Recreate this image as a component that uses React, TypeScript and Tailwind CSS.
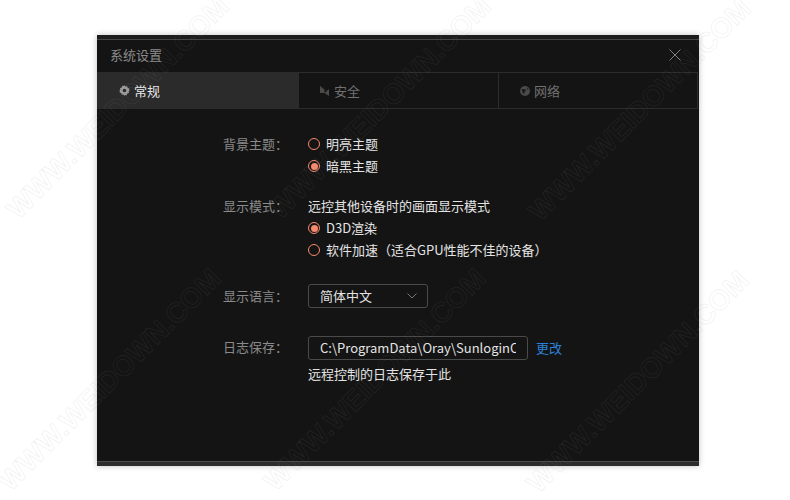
const font = { fontFamily: '"Noto Sans CJK SC", "Noto Sans", sans-serif' };

// centres of the diagonal watermark tiles
const marks = [
  [118, 108],
  [380, 108],
  [640, 110],
  [110, 380],
  [375, 380],
  [638, 382],
];

function Radio({ checked, label }: { checked?: boolean; label: string }) {
  return (
    <label className="flex h-[22px] items-center text-[13px] text-[#e4e4e4]">
      <span className="mr-[6px] flex h-3 w-3 items-center justify-center rounded-full border-[1.5px] border-[#f58a6c]">
        {checked && <span className="h-[7px] w-[7px] rounded-full bg-[#f58a6c]" />}
      </span>
      {label}
    </label>
  );
}

function Tab({ active, label, icon, width }: { active?: boolean; label: string; icon: React.ReactNode; width: string }) {
  return (
    <div
      className={
        active
          ? `flex h-[37px] items-center bg-[#2b2b2b] pl-[21px] text-[13px] text-[#e8e8e8] ${width}`
          : `flex h-[37px] items-center border-y border-r border-[#2c2c2c] pl-[20px] text-[13px] text-[#707070] ${width}`
      }
    >
      <span className={`flex h-3 w-3 items-center justify-center ${active ? "mr-[4px]" : "mr-[3px]"}`}>{icon}</span>
      {label}
    </div>
  );
}

function Row({ label, children, className }: { label: string; children: React.ReactNode; className?: string }) {
  return (
    <div className={`flex ${className ?? ""}`}>
      <div className="flex h-[22px] w-[85px] items-center text-[13px] text-[#8a8a8a]">{label}</div>
      <div className="flex flex-col">{children}</div>
    </div>
  );
}

export default function App() {
  return (
    <div className="relative h-[500px] w-[790px] overflow-hidden bg-white pl-[97px] pt-[35px]" style={font}>
      <div className="flex h-[431px] w-[602px] flex-col bg-[#141414] shadow-[0_0_6px_rgba(0,0,0,0.25)]">
        <div className="h-[5px] border-b border-[#444] bg-[#1c1c1c]" />
        <div className="flex h-[32px] items-center justify-between pb-[2px] pl-[13px] pr-[18px]">
          <span className="text-[13px] text-[#8c8c8c]">系统设置</span>
          <svg width="12" height="12" viewBox="0 0 12 12" fill="none" stroke="#808080" strokeWidth="1">
            <path d="M0.5 0.5l11 11M11.5 0.5l-11 11" />
          </svg>
        </div>
        <div className="flex">
          <Tab
            active
            width="w-[202px]"
            label="常规"
            icon={
              <svg width="11" height="11" viewBox="0 0 12 12" fill="#9a9a9a">
                <path fillRule="evenodd" d="M6 0l1.1 1.6 1.9-.3.5 1.9 1.9.6-.4 1.9L12 6l-1.5.9.4 1.9-1.9.6-.5 1.9-1.9-.3L6 12l-1.1-1.6-1.9.3-.5-1.9-1.9-.6.4-1.9L0 6l1.5-.9-.4-1.9 1.9-.6.5-1.9 1.9.3L6 0zm0 4a2 2 0 100 4 2 2 0 000-4z" />
              </svg>
            }
          />
          <Tab
            width="w-[200px]"
            label="安全"
            icon={
              <svg width="10" height="10" viewBox="0 0 10 10" fill="#4a4a4a">
                <path d="M0 0l4.5 3.5V7H0zM9 3v7L4.5 7z" />
              </svg>
            }
          />
          <Tab
            width="w-[199px]"
            label="网络"
            icon={
              <svg width="10" height="10" viewBox="0 0 10 10">
                <circle cx="5" cy="5" r="5" fill="#4a4a4a" />
                <path d="M1.5 3.5L5 3l1 1.5L4.5 6 4 8.5 2.5 6zM7 1.5l1.5 1.5-1 1z" fill="#1a1a1a" />
              </svg>
            }
          />
        </div>
        <div className="flex flex-col pl-[126px] pt-[24px]">
          <Row label="背景主题：">
            <Radio label="明亮主题" />
            <Radio checked label="暗黑主题" />
          </Row>
          <Row label="显示模式：" className="mt-[18px]">
            <div className="flex h-[22px] items-center text-[13px] text-[#e4e4e4]">远控其他设备时的画面显示模式</div>
            <Radio checked label="D3D渲染" />
            <Radio label="软件加速（适合GPU性能不佳的设备）" />
          </Row>
          <Row label="显示语言：" className="mt-[23px] items-center">
            <div className="flex h-6 w-[120px] items-center justify-between rounded-[3px] border border-[#4a4a4a] pl-[11px] pr-[10px] text-[13px] text-[#e4e4e4]">
              简体中文
              <svg width="10" height="6" viewBox="0 0 10 6" fill="none" stroke="#777" strokeWidth="1">
                <path d="M0.5 0.5L5 5l4.5-4.5" />
              </svg>
            </div>
          </Row>
          <Row label="日志保存：" className="mt-[28px]">
            <div className="flex items-center">
              <div className="flex h-6 w-[220px] items-center overflow-hidden whitespace-nowrap rounded-[3px] border border-[#4a4a4a] px-[11px] text-[13px] text-[#e4e4e4]">
                <span className="w-[197px] overflow-hidden">C:\ProgramData\Oray\SunloginClient</span>
              </div>
              <span className="ml-2 text-[13px] text-[#2a82d8]">更改</span>
            </div>
            <div className="mt-[3px] flex h-[22px] items-center text-[13px] text-[#e4e4e4]">远程控制的日志保存于此</div>
          </Row>
        </div>
        <div className="mt-auto h-[5px] border-t border-[#4a4a4a] bg-[#2c2c2c]" />
      </div>
      {marks.map(([x, y]) => (
        <span
          key={`${x}-${y}`}
          className="pointer-events-none absolute -translate-x-1/2 -translate-y-1/2 -rotate-45 whitespace-nowrap text-[28px] font-bold text-transparent [-webkit-text-stroke:1px_rgba(140,140,140,0.11)]"
          style={{ left: x, top: y, fontFamily: '"Liberation Sans", sans-serif' }}
        >
          WWW.WEIDOWN.COM
        </span>
      ))}
    </div>
  );
}
